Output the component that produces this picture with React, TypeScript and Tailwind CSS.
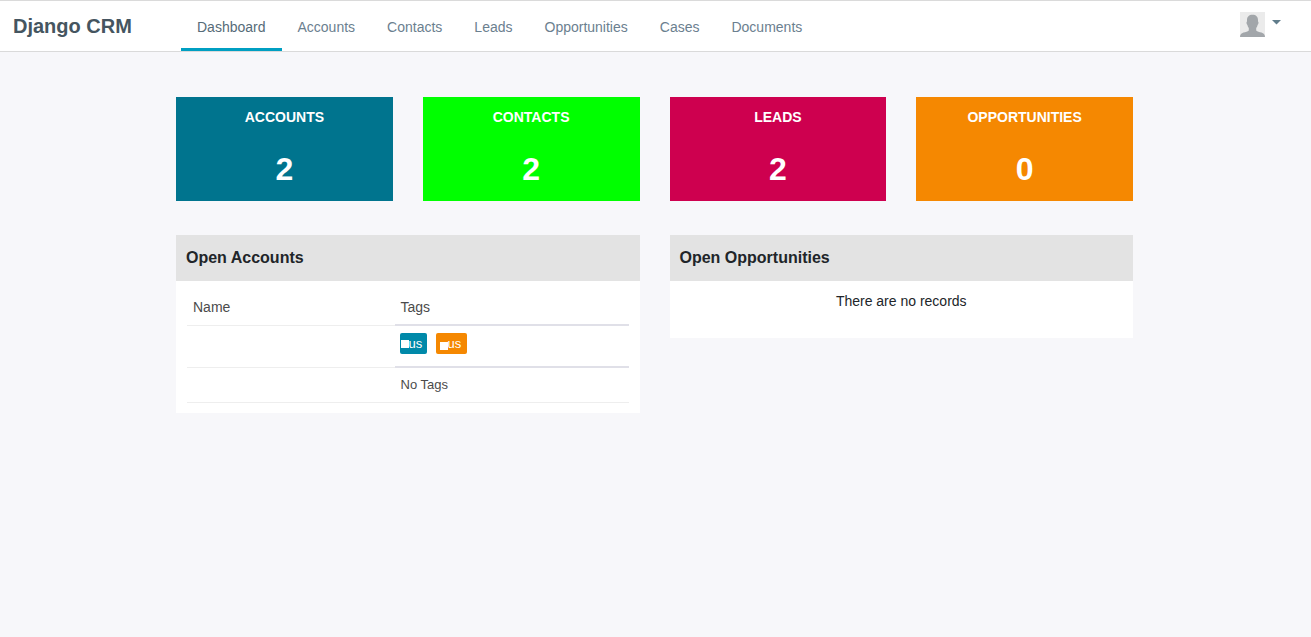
const navItems = ['Dashboard', 'Accounts', 'Contacts', 'Leads', 'Opportunities', 'Cases', 'Documents'];

const stats = [
  { label: 'ACCOUNTS', value: 2, color: 'bg-[#00748e]' },
  { label: 'CONTACTS', value: 2, color: 'bg-[#00ff00]' },
  { label: 'LEADS', value: 2, color: 'bg-[#ce004f]' },
  { label: 'OPPORTUNITIES', value: 0, color: 'bg-[#f58801]' },
];

function Avatar() {
  return (
    <svg viewBox="0 0 25 25" className="size-[25px]" aria-hidden="true">
      <rect width="25" height="25" fill="#ebebeb" />
      <path
        d="M12.5 2.7C9 2.7 7 4.700 7 8v1.500c-.8.2-.7 2.600.4 3.400.3 1.300.7 2.200 1.400 3v2.600c-1 1.200-3.300 1.500-5.300 2.100C1.400 21.300.1 22.600 0 25h25c-.1-2.400-1.400-3.700-3.500-4.400-2-.6-4.300-.9-5.300-2.100v-2.600c.7-.8 1.100-1.700 1.400-3 1.100-.8 1.200-3.200.4-3.400V8c0-3.300-2-5.300-5.500-5.300z"
        fill="#a2a6aa"
      />
    </svg>
  );
}

export default function App() {
  return (
    <div className="min-h-screen bg-[#f7f7fa] font-['Liberation_Sans',Arial,sans-serif] text-[#212529]">
      <header className="flex h-[52px] items-stretch border-y border-[#dadada] bg-white">
        <a href="#" className="w-[181px] shrink-0 pl-[13px] text-[20px] leading-[50px] font-bold text-[#455560]">
          Django CRM
        </a>
        <nav className="flex" aria-label="Main">
          {navItems.map((item, i) => (
            <a
              key={item}
              href="#"
              aria-current={i === 0 ? 'page' : undefined}
              className={`border-b-[3px] px-4 pt-4 text-[14px] leading-5 ${
                i === 0 ? 'border-[#009fc2] text-[#566b78]' : 'border-transparent text-[#6b808f]'
              }`}
            >
              {item}
            </a>
          ))}
        </nav>
        <button type="button" aria-label="User menu" className="mt-[11px] mr-[30px] ml-auto flex items-start gap-[7px] self-start">
          <Avatar />
          <svg viewBox="0 0 9 5" className="mt-2 h-[5px] w-[9px]" aria-hidden="true">
            <path d="M0 0h9L4.500 4.500z" fill="#607d8b" />
          </svg>
        </button>
      </header>

      <main className="pt-[45px] pr-[178px] pb-8 pl-44">
        <section className="grid grid-cols-4 gap-[30px]" aria-label="Totals">
          {stats.map((s) => (
            <a key={s.label} href="#" className={`pt-[10px] pb-3 text-center font-bold text-white ${s.color}`}>
              <div className="text-[14px] leading-5">{s.label}</div>
              <div className="mt-[22px] text-[32px] leading-10">{s.value}</div>
            </a>
          ))}
        </section>

        <div className="mt-[34px] grid grid-cols-2 items-start gap-[30px]">
          <section className="bg-white">
            <h2 className="bg-[#e3e3e3] px-[10px] py-[11px] text-[16px] leading-6 font-bold">Open Accounts</h2>
            <div className="px-[11px] py-[10px]">
              <table className="w-full table-fixed border-separate border-spacing-0 text-left text-[#4b4b4b]">
                <colgroup>
                  <col className="w-[47%]" />
                  <col />
                </colgroup>
                <thead>
                  <tr className="h-[35px] text-[14px] leading-5">
                    <th className="border-b border-[#eeeeee] px-[6px] pb-[2px] font-normal">Name</th>
                    <th className="border-b-2 border-[#e0e0e8] px-[6px] pb-[2px] font-normal">Tags</th>
                  </tr>
                </thead>
                <tbody className="text-[13px] leading-5">
                  <tr className="h-[42px]">
                    <td className="border-b border-[#eeeeee]" />
                    <td className="border-b-2 border-[#e0e0e8] px-[5px] align-top">
                      <div className="mt-[7px] flex gap-[9px] leading-[21px] text-white">
                        <span className="flex w-[27px] items-center rounded-[2px] bg-[#0089a9]">
                          <span className="ml-px size-2 bg-white" />
                          us
                        </span>
                        <span className="flex w-[31px] items-center rounded-[2px] bg-[#f58801]">
                          <span className="mt-1 ml-1 size-2 bg-white" />
                          us
                        </span>
                      </div>
                    </td>
                  </tr>
                  <tr className="h-[35px]">
                    <td className="border-b border-[#eeeeee]" />
                    <td className="border-b border-[#eeeeee] px-[6px]">No Tags</td>
                  </tr>
                </tbody>
              </table>
            </div>
          </section>

          <section className="bg-white">
            <h2 className="bg-[#e3e3e3] px-[10px] py-[11px] text-[16px] leading-6 font-bold">Open Opportunities</h2>
            <p className="pt-[10px] pb-[27px] text-center text-[14px] leading-5">There are no records</p>
          </section>
        </div>
      </main>
    </div>
  );
}
